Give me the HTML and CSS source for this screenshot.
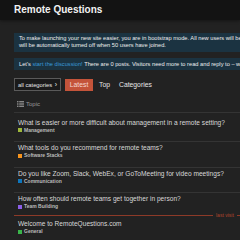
FILE: index.html
```html
<!DOCTYPE html>
<html lang="en">
<head>
  <meta charset="UTF-8" />
  <title>Remote Questions</title>
  <link rel="stylesheet" href="styles.css">
</head>
<body>
  <header class="site-header">
    <div class="title">Remote Questions</div>
  </header>

  <main class="wrap">
    <div class="alert">
      To make launching your new site easier, you are in bootstrap mode. All new users will be granted trust level 1 and have daily email summary emails enabled. This<br>
      will be automatically turned off when 50 users have joined.
    </div>

    <div class="alert single">
      Let's <a href="#">start the discussion!</a> There are 0 posts. Visitors need more to read and reply to – we recommend at least 5 posts.
    </div>

    <nav class="nav">
      <button class="cat-drop">all categories <span class="caret">›</span></button>
      <a class="pill active" href="#">Latest</a>
      <a class="pill top" href="#">Top</a>
      <a class="pill cats" href="#">Categories</a>
    </nav>

    <div class="list-head">
      <svg class="list-icon" width="7" height="6" viewBox="0 0 7 6">
        <rect x="0" y="0" width="1.5" height="1.4" fill="#888"/>
        <rect x="2.2" y="0" width="4.8" height="1.4" fill="#888"/>
        <rect x="0" y="2.3" width="1.5" height="1.4" fill="#888"/>
        <rect x="2.2" y="2.3" width="4.8" height="1.4" fill="#888"/>
        <rect x="0" y="4.6" width="1.5" height="1.4" fill="#888"/>
        <rect x="2.2" y="4.6" width="4.8" height="1.4" fill="#888"/>
      </svg>
      Topic
    </div>

    <div class="topic">
      <div class="topic-title">What is easier or more difficult about management in a remote setting?</div>
      <div class="badge"><span class="sq management"></span>Management</div>
    </div>
    <div class="topic">
      <div class="topic-title">What tools do you recommend for remote teams?</div>
      <div class="badge"><span class="sq software"></span>Software Stacks</div>
    </div>
    <div class="topic">
      <div class="topic-title">Do you like Zoom, Slack, WebEx, or GoToMeeting for video meetings?</div>
      <div class="badge"><span class="sq communication"></span>Communication</div>
    </div>
    <div class="topic last-read">
      <div class="topic-title">How often should remote teams get together in person?</div>
      <div class="badge"><span class="sq team"></span>Team Building</div>
    </div>
    <div class="last-visit"><span>last visit</span></div>
    <div class="topic no-line">
      <div class="topic-title">Welcome to RemoteQuestions.com</div>
      <div class="badge"><span class="sq general"></span>General</div>
    </div>
  </main>
</body>
</html>
```

FILE: styles.css
```css
:root {
  --bg: #222222;
  --header: #131313;
  --text: #dddddd;
  --muted: #999999;
  --alert: #1b3341;
  --link: #3a9ad9;
  --accent: #c4543a;
  --line: #343434;
}

* {
  box-sizing: border-box;
}

html, body {
  overflow: hidden;
}

body {
  margin: 0;
  width: 240px;
  height: 240px;
  font-family: "Liberation Sans", Arial, sans-serif;
  background-color: var(--bg);
  color: var(--text);
}

.site-header {
  background: var(--header);
  height: 20px;
  padding: 4px 14px 0;
  box-shadow: 0 1px 3px rgba(0,0,0,0.4);
}

.title {
  font-size: 10px;
  font-weight: bold;
  color: #f2f2f2;
  white-space: nowrap;
}

.wrap {
  width: 620px;
  padding: 13px 0 0 14px;
}

.alert {
  background: var(--alert);
  color: #eeeeee;
  font-size: 5.7px;
  line-height: 7px;
  padding: 2px 5px 3px;
  margin-bottom: 6px;
  white-space: nowrap;
}

.alert.single {
  padding: 2.5px 5px;
  margin-bottom: 8px;
}

.alert a {
  color: var(--link);
  text-decoration: none;
}

.nav {
  display: flex;
  align-items: center;
  height: 13px;
}

.cat-drop {
  font-family: inherit;
  font-size: 5.8px;
  color: #e6e6e6;
  background: #1a1a1a;
  border: 1px solid #5a5a5a;
  height: 13px;
  width: 47px;
  padding: 0 3px;
  display: flex;
  align-items: center;
  justify-content: space-between;
}

.caret {
  font-size: 7px;
}

.pill {
  font-size: 6.8px;
  color: #e6e6e6;
  text-decoration: none;
  line-height: 12px;
}

.pill.active {
  background: var(--accent);
  color: #f5d8d0;
  padding: 0 4.75px;
  margin-left: 4px;
}

.pill.top {
  margin-left: 6px;
}

.pill.cats {
  margin-left: 9px;
}

.list-head {
  display: flex;
  align-items: center;
  gap: 2px;
  font-size: 6px;
  line-height: 8px;
  color: var(--muted);
  margin: 8.5px 0 4px;
  padding: 0 0 4px 3px;
  border-bottom: 1px solid var(--line);
}

.topic {
  padding: 2px 0 7.5px 4px;
  border-bottom: 1px solid var(--line);
}

.topic.last-read,
.topic.no-line {
  border-bottom: none;
}

.topic-title {
  font-size: 6.6px;
  color: #d8d8d8;
  white-space: nowrap;
  line-height: 8px;
}

.badge {
  font-size: 5px;
  font-weight: bold;
  color: #bbbbbb;
  display: flex;
  align-items: center;
  gap: 1px;
  line-height: 7px;
}

.sq {
  display: inline-block;
  width: 4px;
  height: 4px;
  margin-right: 1px;
}

.management { background: #9eb83b; }
.software { background: #f7941d; }
.communication { background: #0e76bd; }
.team { background: #8c5fe8; }
.general { background: #3ab54a; }

.last-visit {
  width: 300px;
  height: 1px;
  background: #8d3a28;
  margin: -2.5px 0 2px;
  position: relative;
}

.last-visit span {
  position: absolute;
  left: 199px;
  top: -4px;
  font-size: 5px;
  color: #b0452c;
  background: var(--bg);
  padding: 0 3px;
  line-height: 8px;
}
```
